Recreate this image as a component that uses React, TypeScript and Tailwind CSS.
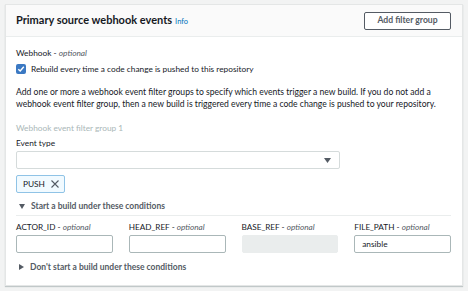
import React from 'react';

const font = { fontFamily: 'Lato, "Noto Sans", sans-serif' };

const Field: React.FC<{ name: string; value?: string; disabled?: boolean }> = ({ name, value, disabled }) => (
  <div className="flex flex-col w-[97px]">
    <div className="text-[8.2px] leading-[12px] text-[#16191f] whitespace-nowrap">
      {name} - <i className="text-[#545b64]">optional</i>
    </div>
    <div
      className={`mt-[2px] h-[18px] rounded-[2px] px-[7px] text-[8.3px] leading-[16px] text-[#16191f] ${
        disabled ? 'bg-[#eaeded] border border-[#eaeded]' : 'bg-white border border-[#aab7b8]'
      }`}
    >
      {value}
    </div>
  </div>
);

export default function App() {
  return (
    <div className="w-[468px] h-[291px] bg-[#f2f3f3] pt-[4px] px-[5px]" style={font}>
      <div className="w-[458px] h-[282px] bg-white border border-[#e4e6e6] shadow-[0_1px_1px_rgba(0,28,36,0.2)]">
        {/* header */}
        <div className="h-[32px] bg-[#fafafa] border-b border-[#eaeded] flex items-center justify-between pl-[10px] pr-[11px]">
          <div className="flex items-baseline gap-[3px]">
            <span className="text-[11px] font-bold text-[#16191f]">Primary source webhook events</span>
            <span className="text-[7.5px] text-[#0073bb]">Info</span>
          </div>
          <button className="h-[18px] w-[87px] border border-[#545b64] rounded-[2px] bg-white text-[8.6px] font-bold text-[#545b64] leading-none">
            Add filter group
          </button>
        </div>

        {/* body */}
        <div className="pl-[10px] pr-[11px] pt-[10px]">
          <div className="text-[8.3px] leading-[12px] text-[#16191f]">
            Webhook - <i className="text-[#545b64]">optional</i>
          </div>
          <label className="mt-[4px] flex items-center gap-[5px] h-[12px]">
            <span className="w-[10px] h-[10px] rounded-[2px] bg-[#3b79c3] flex items-center justify-center">
              <svg width="8" height="8" viewBox="0 0 8 8">
                <path d="M1.3 4.2 L3.2 6 L6.8 1.8" stroke="white" strokeWidth="1.4" fill="none" />
              </svg>
            </span>
            <span className="text-[8.3px] leading-[12px] text-[#16191f]">
              Rebuild every time a code change is pushed to this repository
            </span>
          </label>

          <p className="mt-[11px] text-[8.6px] leading-[12px] text-[#16191f] w-[432px]">
            Add one or more a webhook event filter groups to specify which events trigger a new build. If you do not add a
            webhook event filter group, then a new build is triggered every time a code change is pushed to your repository.
          </p>

          <div className="mt-[12px] text-[8.3px] leading-[12px] text-[#aab7b8]">Webhook event filter group 1</div>

          <div className="mt-[3px] text-[8.3px] leading-[12px] text-[#16191f]">Event type</div>
          <div className="mt-[2px] w-[324px] h-[18px] border border-[#d5dbdb] rounded-[2px] flex items-center justify-end pr-[8px]">
            <svg width="7" height="5" viewBox="0 0 7 5">
              <path d="M0 0 H7 L3.5 5 Z" fill="#545b64" />
            </svg>
          </div>

          <div className="mt-[4px] inline-flex items-center gap-[6px] h-[18px] pl-[6px] pr-[5px] bg-[#f1faff] border border-[#8fc3e6] rounded-[2px]">
            <span className="text-[8.3px] text-[#16191f]">PUSH</span>
            <svg width="8" height="8" viewBox="0 0 8 8">
              <path d="M0.5 0.5 L7.5 7.5 M7.5 0.5 L0.5 7.5" stroke="#545b64" strokeWidth="1.1" />
            </svg>
          </div>

          <div className="mt-[7px] pl-[3px] flex items-center gap-[6px] pb-[3px] border-b border-[#eaeded]">
            <svg width="6" height="5" viewBox="0 0 6 5">
              <path d="M0 0 H6 L3 5 Z" fill="#545b64" />
            </svg>
            <span className="text-[8.5px] font-bold text-[#545b64] leading-[12px]">Start a build under these conditions</span>
          </div>

          <div className="mt-[5px] flex gap-[16px]">
            <Field name="ACTOR_ID" />
            <Field name="HEAD_REF" />
            <Field name="BASE_REF" disabled />
            <Field name="FILE_PATH" value="ansible" />
          </div>

          <div className="mt-[8px] pl-[3px] flex items-center gap-[6px]">
            <svg width="5" height="6" viewBox="0 0 5 6">
              <path d="M0 0 V6 L5 3 Z" fill="#545b64" />
            </svg>
            <span className="text-[8.5px] font-bold text-[#545b64] leading-[12px]">Don't start a build under these conditions</span>
          </div>
        </div>
      </div>
    </div>
  );
}
